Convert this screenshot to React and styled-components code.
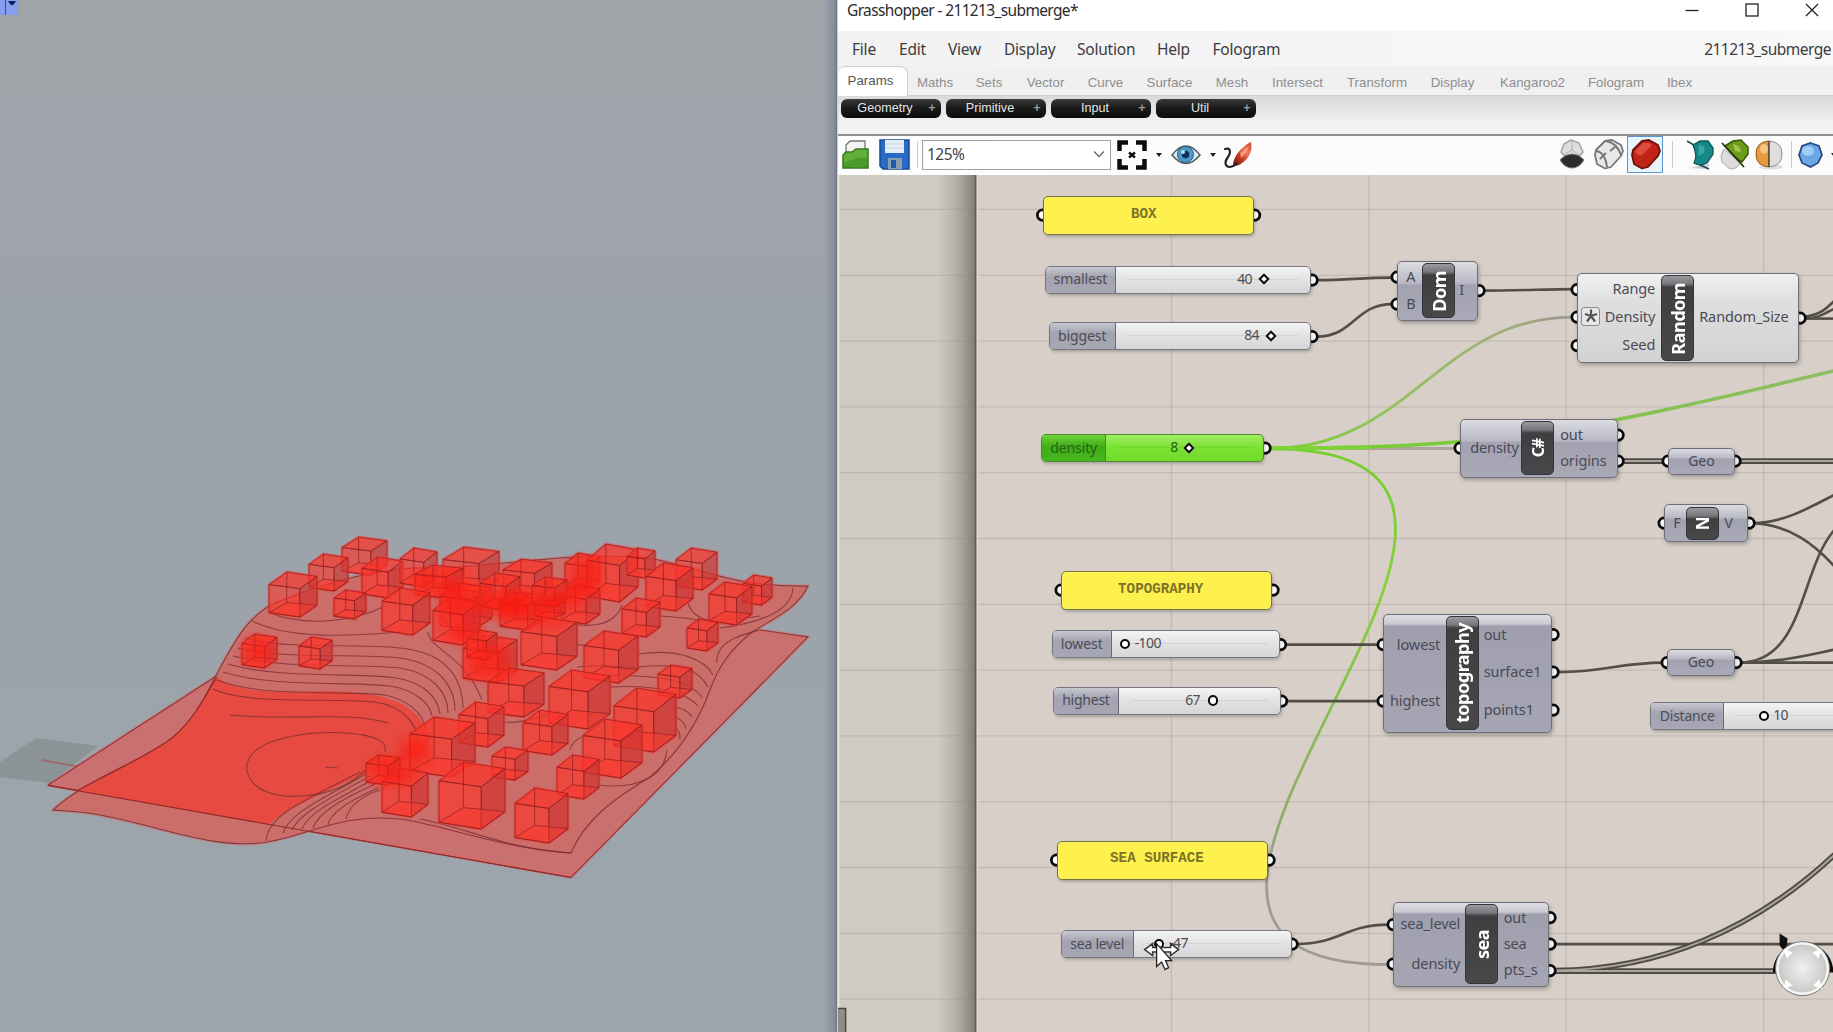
import React from "react";
import styled, { createGlobalStyle } from "styled-components";

const Global = createGlobalStyle`
  *{box-sizing:border-box}
  html,body{margin:0;height:100%;overflow:hidden;background:#9ca3ab}
`;
const Desktop = styled.div`
  display:flex;width:1833px;height:1032px;overflow:hidden;
  font-family:"Noto Sans","Open Sans",sans-serif;
`;

/* ---------- 3D viewport ---------- */
const Viewport = styled.section`
  width:837px;height:1032px;flex:none;
  background:linear-gradient(90deg,transparent 824px,#8f95a2 831px,#858a98 835px,#6c707c 837px),linear-gradient(180deg,#9fa4a9 0,#9ca3aa 400px,#9ca5ad 1032px);
  svg{display:block}
`;
const BOXES = [
  [342,537,387,575],[309,554,348,591],[362,557,403,598],[269,572,317,617],[334,590,366,619],[400,548,437,587],
  [443,547,499,592],[415,565,463,598],[503,559,552,598],[565,553,600,590],[587,544,638,602],[627,548,655,578],
  [676,548,717,590],[743,575,772,605],[646,563,693,611],[709,582,752,625],[382,588,430,635],[561,585,600,624],
  [440,583,492,630],[433,597,480,645],[480,573,520,610],[500,592,543,630],[532,577,567,607],[535,600,565,618],
  [622,598,660,637],[687,619,718,651],[242,634,277,668],[299,637,332,669],[521,617,577,670],[584,631,638,683],
  [463,635,517,683],[467,630,497,660],[488,668,544,717],[549,670,610,729],[658,665,692,698],[614,688,676,752],
  [459,702,504,747],[523,710,568,755],[583,719,642,778],[410,717,475,777],[366,755,400,785],
  [492,747,528,780],[557,755,599,799],[382,768,428,817],[439,762,505,829],[515,788,568,843],
];
const HOT = [[440,590,88,26],[500,596,60,26],[545,585,40,24],[468,645,42,32],[572,560,28,34],[372,760,40,24],[450,622,30,20],[245,640,28,22],[415,575,50,18],[400,740,30,24]];

function Cube({ b: [x0, y0, x1, y1] }) {
  const w = x1 - x0, h = y1 - y0;
  const P = (a, c) => `${(x0 + a * w).toFixed(1)},${(y0 + c * h).toFixed(1)}`;
  const A = P(0, .28), B = P(.64, .37), C = P(.64, 1), D = P(0, .9);
  const E = P(.37, 0), F = P(1, .1), G = P(1, .74), H = P(.37, .68);
  return (
    <g stroke="#8e1f1f" strokeOpacity=".7" strokeWidth="1" strokeLinejoin="round">
      <polygon points={`${A} ${E} ${F} ${G} ${C} ${D}`} fill="#fb2f25" fillOpacity=".5" stroke="#fb3a32" strokeOpacity=".5" strokeWidth="3" />
      <polygon points={`${A} ${E} ${F} ${B}`} fill="#fb352b" fillOpacity=".5" />
      <polygon points={`${B} ${F} ${G} ${C}`} fill="#b53a3a" fillOpacity=".45" />
      <polygon points={`${A} ${B} ${C} ${D}`} fill="#ff3a2e" fillOpacity=".28" />
      <polygon points={`${D} ${H} ${G} ${C}`} fill="#ff3a2e" fillOpacity=".45" />
      <path d={`M${E} L${H}`} fill="none" />
    </g>
  );
}
const TERRAIN = "M53,810 C85,780 140,762 170,740 C197,718 208,690 219,670 C235,640 250,612 280,601 C320,585 380,565 440,568 C500,566 560,553 640,557 C690,562 725,588 808,586 C798,608 775,618 752,632 C728,652 718,668 710,690 C698,722 680,752 650,777 C612,800 585,820 571,853 C500,848 440,824 400,819 C340,813 310,835 267,842 C210,852 140,818 80,812 Z";
const BASIN = "M77,791 C110,772 145,758 172,738 C196,718 207,692 217,677 C240,695 280,692 330,691 C370,692 410,698 424,725 C438,745 420,755 400,762 C360,775 335,787 305,802 C285,812 275,818 269,825 Z";
const CONTOURS = [
  "M268,612 C300,626 350,624 385,606","M252,621 C290,640 350,636 400,632",
  "M245,638 C290,650 350,643 400,648 C440,652 462,672 463,708",
  "M238,648 C290,660 350,653 400,658 C436,663 455,684 455,711",
  "M233,656 C290,670 350,663 400,668 C432,673 448,692 448,713",
  "M228,664 C280,679 350,672 396,678 C424,682 438,698 440,714",
  "M223,672 C275,688 345,681 390,686 C416,690 430,704 432,716",
  "M217,680 C262,698 340,690 385,695 C408,700 424,714 425,728",
  "M213,689 C250,706 330,697 375,702 C402,706 418,724 417,740",
  "M230,715 C290,721 350,711 388,723",
  "M385,752 C390,735 350,731 315,733 C265,738 245,752 247,770 C250,790 275,798 300,796 C330,795 350,785 366,770",
  "M266,841 C268,815 300,803 360,772","M283,833 C290,812 325,798 366,774","M292,830 C300,812 335,796 370,776",
  "M302,829 C308,812 340,798 372,780","M313,828 C318,812 345,798 375,784","M328,825 C330,812 355,798 378,788","M346,819 C348,808 360,796 380,790",
  "M638,654 C680,648 705,660 713,675","M638,667 C685,662 700,672 708,687","M610,675 C670,676 690,682 702,697","M610,687 C665,684 690,696 698,706",
  "M673,707 C685,708 690,714 692,717","M675,717 C683,720 686,726 686,729","M675,728 Q681,732 680,740",
  "M598,785 C640,790 665,775 667,750","M570,750 Q572,740 585,736","M428,632 C430,650 465,655 482,700",
  "M505,722 C520,724 540,716 560,712","M793,588 C792,610 765,622 720,628","M688,603 C695,625 715,622 760,616",
  "M717,663 C715,640 745,634 760,630","M552,618 C590,632 615,625 622,605","M660,616 C690,618 700,620 712,622",
  "M577,645 L584,645","M577,667 C600,665 612,666 640,668","M420,819 C460,826 510,850 571,853",
];
function Scene() {
  return (
    <svg width="837" height="1032" viewBox="0 0 837 1032">
      <defs><filter id="soft"><feGaussianBlur stdDeviation="5" /></filter></defs>
      <path d="M0,762 L36,738 L98,746 L50,783 L0,777Z" fill="#8b9397" />
      <path d="M50,758 L60,748" stroke="#7ba07b" strokeWidth="1.5" />
      <path d="M42,760 L85,768" stroke="#9b6a6c" strokeWidth="2" />
      <g stroke="#f0605b" strokeOpacity=".45" strokeWidth="3.500" fill="#c97171" strokeLinejoin="round">
        <path d="M48,785 L218,675 L260,690 L560,700 L760,630 L808,637 L571,877Z" />
        <path d={TERRAIN} />
      </g>
      <path d="M48,785 L218,675 M760,630 L808,637 L571,877.5 L48,785" fill="none" stroke="#7f3a40" strokeWidth="1.1" />
      <path d={TERRAIN} fill="#cb6d69" stroke="#7f3a40" strokeWidth="1.1" />
      <path d={BASIN} fill="#e64a40" />
      <path d="M48,785.5 L571,877.5 M77,791 C110,772 145,758 172,738 C196,718 207,692 217,677" fill="none" stroke="#8e2b2c" strokeWidth="1.1" />
      <g fill="none" stroke="#752d2f" strokeOpacity=".75" strokeWidth="1.1">{CONTOURS.map((d) => <path key={d} d={d} />)}<path d="M325,767 L338,768" /></g>
      {BOXES.map((b) => <Cube key={b.join()} b={b} />)}
      <g fill="#fb1a12" fillOpacity=".65" filter="url(#soft)">
        {HOT.map(([x, y, w, h]) => <rect key={x + "-" + y} x={x} y={y} width={w} height={h} />)}
      </g>
      <rect x="0" y="0" width="18" height="15" fill="#869df0" />
      <path d="M5.5,0 V15" stroke="#3c4f8a" strokeWidth="1" />
      <path d="M8,1 H16 L14,4 L12,5.500 L10,4Z" fill="#0d1f5c" />
    </svg>
  );
}

/* ---------- window chrome ---------- */
const Window = styled.main`
  flex:1;min-width:0;height:1032px;display:flex;flex-direction:column;border-left:1px solid #cfd0d6;background:#fff;overflow:hidden;
`;
const TitleBar = styled.header`
  height:31px;flex:none;display:flex;align-items:flex-start;justify-content:space-between;padding-left:9px;background:#fff;
  color:#2b2b2b;font-size:15.5px;line-height:21px;letter-spacing:-.64px;
`;
const WinButtons = styled.div`
  display:flex;gap:46px;padding:3px 14.5px 0 0;
  svg{width:14px;height:14px;display:block;stroke:#222;fill:none;stroke-width:1.3}
`;
const MenuBar = styled.nav`
  height:35px;flex:none;display:flex;align-items:center;padding:1px 0 0 14px;background:linear-gradient(90deg,#f2f2f2,#f8f8f8);
  color:#3c3c3c;font-size:15.5px;
`;
const MenuItem = styled.span`width:${(p) => p.$w}px;flex:none;white-space:nowrap;letter-spacing:-.22px;`;
const FileName = styled.span`margin-left:auto;padding-right:2px;letter-spacing:-.5px;`;
const TabRow = styled.div`
  height:30px;flex:none;display:flex;align-items:flex-end;background:#f0f0f0;border-bottom:1px solid #cfcfcf;
  font-family:"Liberation Sans",Arial,sans-serif;font-size:13.3px;color:#8e8e8e;
`;
const Tab = styled.span`
  width:${(p) => p.$w}px;height:29px;flex:none;white-space:nowrap;text-align:center;line-height:33px;
  ${(p) => p.$on && "background:#fff;color:#555;border:1px solid #cfcfcf;border-width:1px 1px 0 0;border-radius:7px 8px 0 0;line-height:28px;height:30px;margin-bottom:-1px;padding-right:4px;"}
`;
const Ribbon = styled.div`
  height:38px;flex:none;display:flex;gap:5px;padding:3px 0 0 3px;background:linear-gradient(#d9dadb,#f1f1f2 70%,#f4f4f4);
`;
const Group = styled.div`
  width:100px;height:19px;border-radius:6px;background:linear-gradient(#3b3b3b,#1b1b1b 45%,#0c0c0c);color:#e4e4e4;
  font:12.6px/18px "Liberation Sans",Arial,sans-serif;display:flex;align-items:flex-start;
  span{flex:1;text-align:center;padding-left:2px}
  i{width:18px;font-style:normal;font-weight:bold;color:#999;text-align:center;margin-left:-4px}
`;
const Toolbar = styled.div`
  height:41px;flex:none;display:flex;align-items:center;border-top:2px solid #8d8d92;padding-bottom:2px;background:linear-gradient(90deg,#fdfdfd,#fbfbfc);
  > svg{flex:none}
`;
const Space = styled.span`width:${(p) => p.$w}px;flex:none;`;
const Sep = styled.span`width:1px;height:27px;background:#c9c9cc;flex:none;`;
const Zoom = styled.div`
  width:189px;height:30px;flex:none;border:1px solid #a0a0a0;background:#fff;display:flex;align-items:center;justify-content:space-between;
  padding:0 5px 2px 4px;font-size:15.5px;letter-spacing:-.5px;color:#444;
`;
const Caret = styled.span`width:0;height:0;flex:none;border:3px solid transparent;border-top:4px solid #222;border-bottom:0;`;
const Picked = styled.span`
  width:36px;height:37px;flex:none;display:grid;place-items:center;border:1.500px solid #5f97cc;background:#e9f3fb;
`;

const FolderIcon = () => (
  <svg width="28" height="32" viewBox="0 0 28 32"><path d="M4,14 V6 L8,2 H23 V18 H4Z" fill="#f3f3f3" stroke="#777" strokeWidth="1.300" /><path d="M1,29 V16 L4,13 H10 L14,10 H26 V29Z" fill="#62b03a" stroke="#34771d" strokeWidth="1.500" /><path d="M2,24 Q14,18 25,19 V28 H2Z" fill="#4a9a29" /></svg>
);
const SaveIcon = () => (
  <svg width="31" height="31" viewBox="0 0 31 31"><path d="M1,1 H30 V30 H4 L1,27Z" fill="#276bc7" stroke="#184a94" strokeWidth="1.500" /><rect x="6" y="1" width="19" height="13" fill="#e7edf4" /><path d="M6,5 H25 M6,9 H25" stroke="#c9d4e2" /><rect x="9" y="19" width="14" height="11" fill="#8c9ead" /><rect x="12" y="21" width="5" height="8" fill="#1f5aa8" /></svg>
);
const FitIcon = () => (
  <svg width="30" height="30" viewBox="0 0 30 30" fill="none" stroke="#0c0c0c" strokeWidth="4.500"><path d="M2.500,11 V2.500 H11 M19,2.500 H27.500 V11 M27.500,19 V27.500 H19 M11,27.500 H2.500 V19" /><path d="M12,12.500 L18,17.500 M18,12.500 L12,17.500" strokeWidth="2.300" /></svg>
);
const EyeIcon = () => (
  <svg width="30" height="22" viewBox="0 0 30 22"><path d="M1,11 Q15,-7 29,11 Q15,28 1,11Z" fill="#dbeaf0" stroke="#50585c" strokeWidth="1.500" /><circle cx="14.500" cy="10.500" r="8" fill="#4a9bc8" stroke="#2b607e" /><circle cx="14.500" cy="10.500" r="3.800" fill="#0f2f55" /><circle cx="12" cy="8" r="2" fill="#b9e2f4" /></svg>
);
const SketchIcon = () => (
  <svg width="30" height="30" viewBox="0 0 30 30">
    <defs><linearGradient id="brush" x1="0" y1="1" x2="1" y2="0"><stop offset="0" stopColor="#5a1710" /><stop offset=".4" stopColor="#c93a22" /><stop offset=".65" stopColor="#f07a55" /><stop offset="1" stopColor="#c8402c" /></linearGradient></defs>
    <path d="M10,24 C11,16 19,6 28,2 C30,12 25,20 16,25 Q12,27 10,24Z" fill="url(#brush)" />
    <path d="M17,13 Q24,8 26,6 Q24,13 18,18Z" fill="#f9b49a" opacity=".7" />
    <path d="M2,9 C8,7 8,13 5,17 C1,22 2,27 7,27 Q10,27 13,24" fill="none" stroke="#25201e" strokeWidth="2.200" strokeLinecap="round" />
  </svg>
);
const Barrel = ({ fill, edge, hi, wire }) => (
  <svg width="31" height="31" viewBox="0 0 31 31">
    <path d="M2,16 L3,11 L12,2 L19,1 L28,6 L30,12 L28,17 L18,28 L12,29.500 L4,25Z" fill={fill} stroke={edge} strokeWidth="1.800" strokeLinejoin="round" />
    {!wire && <path d="M5,12 L13,4 Q19,3 22,6 L12,16 Q6,17 5,12Z" fill={hi} opacity=".55" />}
    {wire && <path d="M3,12 Q12,13 14,28 M13,2 Q24,4 28,16 M7,20 L13,14 M17,12 L22,8" fill="none" stroke="#777" strokeWidth="1.900" />}
  </svg>
);
const HiddenIcon = () => (
  <svg width="26" height="31" viewBox="0 0 26 31"><path d="M2,13 L5,5 L12,1 L20,4 L24,13 L18,20 H8Z" fill="#dedede" stroke="#a4a4a4" strokeWidth="1.500" strokeLinejoin="round" /><path d="M13,2 V11 L20,16 M13,11 L6,15" stroke="#b0b0b0" fill="none" /><path d="M1,21 Q6,15 13,15 Q20,15 25,21 Q20,29 13,29 Q6,29 1,21Z" fill="#2c2c2c" stroke="#777" /></svg>
);
const TealIcon = () => (
  <svg width="29" height="32" viewBox="0 0 29 32"><path d="M3,29 L21,30 L24,25Z" fill="#ccc" /><path d="M7,6 L14,2 L22,2 L27,9 L27,15 L21,24 Q14,28 8,24 Q12,17 7,6Z" fill="#168789" stroke="#0c5658" strokeWidth="1.300" /><path d="M13,6 Q20,5 18,14 L12,17Z" fill="#50b8b6" opacity=".6" /><path d="M1,2 L8,6 M14,26 L23,30" fill="none" stroke="#184d50" strokeWidth="1.500" /></svg>
);
const GreenIcon = () => (
  <svg width="31" height="32" viewBox="0 0 31 32"><path d="M5,10 L2,17 L3,23 L11,30 L17,29 L22,24Z" fill="#dcdcdc" stroke="#aaa" /><path d="M6,7 L14,2 L22,1 L29,8 L29,15 L23,23 Q16,19 6,7Z" fill="#6c9c1a" stroke="#39570b" strokeWidth="1.500" /><path d="M14,5 Q21,6 22,13 L16,12Z" fill="#b6d864" opacity=".7" /><path d="M3,4 L25,28" stroke="#233606" strokeWidth="1.800" fill="none" /></svg>
);
const HalfIcon = () => (
  <svg width="29" height="31" viewBox="0 0 29 31"><ellipse cx="16" cy="28" rx="12" ry="2.500" fill="#ddd" /><path d="M14,2 Q1,3 1,15 Q1,27 14,28Z" fill="#e79a37" stroke="#8e5a1a" /><path d="M14,2 Q27,3 27,15 Q27,27 14,28Z" fill="#dededc" stroke="#8f8f8d" /><ellipse cx="9" cy="10" rx="4" ry="5" fill="#fbd9a2" opacity=".7" /><path d="M14,2 V28" stroke="#4b3f33" strokeWidth="1.300" /></svg>
);
const BlueIcon = () => (
  <svg width="25" height="26" viewBox="0 0 25 26"><path d="M12.500,1 L21,4 L24,13 L20,21 L12.500,25 L4,21 L1,13 L4,4Z" fill="#6da6e4" stroke="#244b80" strokeWidth="1.700" /><ellipse cx="10" cy="9" rx="6" ry="5" fill="#b6dbfa" opacity=".7" /></svg>
);

/* ---------- graph canvas ---------- */
const OX = 838.8, OY = 175.6;
const Canvas = styled.section`position:relative;flex:1;min-height:0;overflow:hidden;background:#d7cfc8;`;
const Layer = styled.svg`position:absolute;inset:0;display:block;`;
const placed = (p) => `position:absolute;left:${p.$x - OX}px;top:${p.$y - OY}px;width:${p.$w}px;height:${p.$h}px;`;
const Note = styled.div`
  ${placed}
  border:1.500px solid #77713a;border-radius:5px;background:#fef04d;box-shadow:inset 0 0 2px #fff8a0,1px 2px 3px #0003;
  display:flex;align-items:center;justify-content:center;padding:0 9px 4px 0;padding-right:${(p) => p.$pad ?? 9}px;
  font:bold 14.2px/20px "Liberation Mono","Courier New",monospace;color:#7c7228;white-space:pre;
`;
const lilac = "linear-gradient(#dcdce2,#b9b9c6 36%,#a2a2b1 40%,#a9a9b8)";
const SliderBox = styled.div`
  ${placed}
  display:flex;border:1.500px solid #77767e;border-radius:5px;overflow:hidden;font-size:14px;color:#4d4d55;
  background:${(p) => (p.$green ? "linear-gradient(#a2ee63,#7be234 45%,#72da2b)" : "linear-gradient(#f4f4f5,#e3e3e4 45%,#d6d6d8)")};
  ${(p) => p.$green && "border-color:#4d8a2b;color:#26611a;"}
  box-shadow:1px 2px 3px #0003;
`;
const SliderLabel = styled.div`
  width:${(p) => p.$w}px;flex:none;border-right:1.500px solid #6a6a73;display:flex;align-items:center;justify-content:center;padding-bottom:2px;
  letter-spacing:${(p) => p.$ls ?? -0.1}px;
  background:${(p) => (p.$green ? "linear-gradient(#6fd23c,#3fae17 45%,#47b51d)" : "linear-gradient(#c8c8d1,#a3a3b1 40%,#a6a6b5)")};
`;
const Rail = styled.div`
  position:relative;flex:1;
  &::before{content:"";position:absolute;left:12px;right:12px;top:12px;height:1px;background:#0001;}
`;
const Value = styled.span`position:absolute;top:2px;left:${(p) => p.$x + 1}px;line-height:20px;letter-spacing:-.6px;`;
const Grip = styled.i`
  position:absolute;top:${(p) => (p.$round ? 7.5 : 8.5)}px;left:${(p) => p.$x + 1 - (p.$round ? 5 : 4)}px;
  width:${(p) => (p.$round ? 10.5 : 8)}px;height:${(p) => (p.$round ? 10.5 : 8)}px;border:2.700px solid #0b0b0b;background:#fff;
  ${(p) => (p.$round ? "border-radius:50%;" : "transform:rotate(45deg);")}
`;
function Slider({ x, y, w, split, label, value, vx, gx, round, green, ls }) {
  return (
    <SliderBox $x={x} $y={y} $w={w} $h={28} $green={green}>
      <SliderLabel $w={split - x} $green={green} $ls={ls}>{label}</SliderLabel>
      <Rail><Value $x={vx - split - 1}>{value}</Value><Grip $x={gx - split - 1} $round={round} /></Rail>
    </SliderBox>
  );
}
const Body = styled.div`
  ${placed}
  border:1.500px solid #6f6e78;border-radius:5px;font-size:${(p) => p.$fs ?? 14.5}px;color:#4a4a55;
  background:${(p) => (p.$light ? "linear-gradient(#f1f1f1,#dfdfdf 30%,#d2d2d2)" : p.$tall ? "linear-gradient(#dedee4,#c9c9d2 9px,#9f9fae 11px,#a5a5b3)" : lilac)};
  box-shadow:1px 2px 4px #0004;
  display:flex;align-items:center;justify-content:center;line-height:20px;padding-bottom:1px;
`;
const Core = styled.div`
  ${placed}
  border:1.500px solid #34343a;border-radius:5px;display:flex;align-items:center;justify-content:center;
  background:linear-gradient(#9b9b9f,#77777b 8px,#3f3f42 11px,#48484b);color:#fff;
  span{writing-mode:vertical-rl;transform:rotate(180deg);font:bold ${(p) => p.$fs ?? 18.2}px/30px "Noto Sans",sans-serif;letter-spacing:${(p) => p.$ls ?? -0.6}px;white-space:nowrap}
`;
const PortName = styled.span`
  position:absolute;top:${(p) => p.$y - OY - 11}px;height:20px;line-height:20px;font-size:14.5px;color:#4a4a55;white-space:nowrap;
  letter-spacing:-.1px;
  ${(p) => (p.$right ? `right:${OX + 995 - p.$right}px;` : `left:${p.$x - OX}px;`)}
`;
const Modifier = styled.div`
  ${placed}
  border:1.500px solid #8b8b8b;border-radius:3px;background:#e8e8e8;display:grid;place-items:center;
`;
const H = [209.8,275.7,341.5,407.3,473.1,538.9,604.7,670.5,736.3,802.1,867.9,933.7,999.5];
const V = [1171.8,1369.2,1566.6,1764];
const PORTS_L = [[1043.5,215.500],[1062,590.5],[1057.5,860.5],[1398,277.5],[1398,304.5],[1578,290],[1578,317.5],[1578,346],[1461,448.5],[1669,461.5],[1665,523.5],[1384,645],[1384,701.5],[1668,663],[1394,925],[1394,964.5]];
const PORTS_R = [[1254.5,215.500],[1273,590.5],[1269,860.5],[1312,280.5],[1312,337],[1265,448.500],[1280.5,645],[1281.5,701.5],[1292,944.5],[1479,291],[1800,318.5],[1618,435.500],[1618,461.5],[1735,461.5],[1749,523.5],[1553,635],[1553,672.5],[1553,710.5],[1736,663],[1550,918],[1550,944.5],[1550,971]];
const WIRES = [
  "M1317,280.500 C1350,280.500 1360,278 1393,278","M1317,337 C1355,337 1355,304.500 1393,304.500",
  "M1484,291 C1510,291 1540,290 1573,289.500","M1286,645 H1379","M1287,701.500 H1379",
  "M1558,672.500 C1605,672.500 1620,663 1664,663","M1297,944.500 C1340,944.500 1345,925 1389,925",
  "M1753,523.500 C1785,523 1810,508 1835,495","M1753,523.500 C1790,525 1815,545 1835,567",
  "M1740,663 C1805,663 1800,570 1835,530","M1740,663 C1780,663 1810,655 1835,650","M1740,663 H1835",
  "M1555,944.500 H1835","M1804,317 C1820,316 1828,308 1835,301","M1804,319 C1820,319 1828,312 1835,309","M1804,319 H1835",
];
const DOUBLES = ["M1622,461.500 H1665","M1739,461.500 H1835","M1555,971 C1660,970 1755,930 1835,855","M1555,971.500 H1780"];

function Backdrop() {
  return (
    <Layer width="995" height="857" viewBox="838.4 175.4 995 857">
      <defs>
        <linearGradient id="edge" x1="0" x2="1"><stop offset="0" stopColor="#8a877f" stopOpacity="0" /><stop offset=".45" stopColor="#8a877f" stopOpacity=".35" /><stop offset="1" stopColor="#7c7870" stopOpacity=".95" /></linearGradient>
        <linearGradient id="g1" gradientUnits="userSpaceOnUse" x1="1270" x2="1573" y1="0" y2="0"><stop offset="0" stopColor="#74cf2c" /><stop offset=".35" stopColor="#8fc657" /><stop offset=".75" stopColor="#a0b078" /><stop offset="1" stopColor="#9c9890" /></linearGradient>
        <linearGradient id="g2" gradientUnits="userSpaceOnUse" x1="0" x2="0" y1="449" y2="965"><stop offset="0" stopColor="#74cf2c" /><stop offset=".3" stopColor="#86cf3e" /><stop offset=".7" stopColor="#8fae68" /><stop offset=".82" stopColor="#9aa08a" /><stop offset="1" stopColor="#a09a92" /></linearGradient>
        <linearGradient id="g3" gradientUnits="userSpaceOnUse" x1="1270" x2="1833" y1="0" y2="0"><stop offset="0" stopColor="#74cf2c" /><stop offset="1" stopColor="#8dbc62" /></linearGradient>
      </defs>
      <rect x="838" y="175" width="137" height="858" fill="#cfcac2" />
      <g stroke="#a9a098" strokeOpacity=".42" strokeWidth="1.300">
        {H.map((y) => <path key={y} d={`M838,${y} H1835`} />)}
        {V.map((x) => <path key={x} d={`M${x},175 V1034`} />)}
      </g>
      <rect x="938" y="175" width="38" height="858" fill="url(#edge)" />
      <path d="M976,175 V1034" stroke="#5f5c58" strokeWidth="1.800" />
      <path d="M978,175 V1034" stroke="#e2dcd5" strokeWidth="1.500" />
      <path d="M839,175 V1034" stroke="#eae7e3" strokeWidth="1.500" />
      <path d="M838,1009 H846 V1034 H838Z" fill="#908c87" />
      <path d="M838,1009 H846 V1034" fill="none" stroke="#4a4744" strokeWidth="1.500" />
      <g fill="none">
        <path d="M1270,449 H1457" stroke="#aaa69c" strokeWidth="3" />
        <path d="M1270,449 C1410,449 1440,317.500 1573,317.500" stroke="url(#g1)" strokeWidth="2.800" />
        <path d="M1270,449 C1648,449 1018,965 1389,965" stroke="url(#g2)" strokeWidth="2.800" />
        <path d="M1270,448.500 C1480,448 1560,438 1835,371" stroke="url(#g3)" strokeWidth="3.600" />
        <path d="M1270,449 C1310,449 1330,448 1370,448" stroke="#7cd236" strokeWidth="3.800" />
        <g stroke="#544e49" strokeWidth="2.600">{WIRES.map((d) => <path key={d} d={d} />)}</g>
        <g stroke="#4f4a46" strokeWidth="5.600">{DOUBLES.map((d) => <path key={d} d={d} />)}</g>
        <g stroke="#aaa49c" strokeWidth="2">{DOUBLES.map((d) => <path key={d} d={d} />)}</g>
      </g>
      <g fill="#fff" stroke="#0c0c0c" strokeWidth="2.800">
        {PORTS_L.map(([x, y]) => <circle key={`${x},${y}`} cx={x - .5} cy={y} r="5.2" />)}
        {PORTS_R.map(([x, y]) => <circle key={`${x},${y}`} cx={x + .5} cy={y} r="5.2" />)}
      </g>
    </Layer>
  );
}
function Overlay() {
  return (
    <Layer width="995" height="857" viewBox="838.4 175.4 995 857">
      <defs><radialGradient id="ball"><stop offset="0" stopColor="#f1f0ef" /><stop offset=".7" stopColor="#d5d4d3" /><stop offset="1" stopColor="#c6c5c3" /></radialGradient></defs>
      <path d="M1775.500,973 A28,28 0 0 1 1831.500,973" fill="none" stroke="#0c0c0c" strokeWidth="4.500" />
      <path d="M1780,934 L1788,939 L1787,946 L1793,944 L1784,951 L1780,946Z" fill="#111" />
      <circle cx="1803" cy="969" r="25.500" fill="url(#ball)" stroke="#f7f7f6" strokeWidth="3" />
      <circle cx="1803" cy="969" r="27" fill="none" stroke="#777" strokeWidth="1" />
      <path d="M1784,949 L1793,953 L1787,959Z M1822,949 L1813,953 L1819,959Z M1784,989 L1786,980 L1793,986Z M1822,989 L1820,980 L1813,986Z" fill="#fff" />
      <path d="M1145,950 L1153,944 V948 H1171 V944 L1179,950 L1171,956 V952.500 H1153 V956Z" fill="#fff" stroke="#333" strokeWidth="1.500" />
      <path d="M1157,944 V967 L1162,962.500 L1165.500,970 L1169,968 L1166,961 H1172Z" fill="#fff" stroke="#222" strokeWidth="1.300" />
    </Layer>
  );
}

const MENUS = [["File",47],["Edit",49],["View",56],["Display",73],["Solution",80],["Help",55.5],["Fologram",90]];
const TABS = [["Params",70,1],["Maths",54],["Sets",54],["Vector",59],["Curve",61],["Surface",67],["Mesh",58],["Intersect",73],["Transform",86],["Display",65],["Kangaroo2",95],["Fologram",72],["Ibex",55]];

export default function App() {
  return (
    <Desktop>
      <Global />
      <Viewport><Scene /></Viewport>
      <Window>
        <TitleBar>
          <span>Grasshopper - 211213_submerge*</span>
          <WinButtons>
            <svg viewBox="0 0 14 14"><path d="M0.500,7.500 H13.500" /></svg>
            <svg viewBox="0 0 14 14"><rect x="1" y="1" width="12" height="12" /></svg>
            <svg viewBox="0 0 14 14"><path d="M1,1 L13,13 M13,1 L1,13" /></svg>
          </WinButtons>
        </TitleBar>
        <MenuBar>
          {MENUS.map(([t, w]) => <MenuItem key={t} $w={w}>{t}</MenuItem>)}
          <FileName>211213_submerge</FileName>
        </MenuBar>
        <TabRow>{TABS.map(([t, w, on]) => <Tab key={t} $w={w} $on={on}>{t}</Tab>)}</TabRow>
        <Ribbon>{["Geometry","Primitive","Input","Util"].map((t) => <Group key={t}><span>{t}</span><i>+</i></Group>)}</Ribbon>
        <Toolbar>
          <Space $w={4} /><FolderIcon /><Space $w={9} /><SaveIcon /><Space $w={7} /><Sep /><Space $w={4} />
          <Zoom>125%<svg width="12" height="8" viewBox="0 0 12 8" fill="none" stroke="#666" strokeWidth="1.300"><path d="M1,1.500 L6,6.500 L11,1.500" /></svg></Zoom>
          <Space $w={6} /><FitIcon /><Space $w={9} /><Caret /><Space $w={9} /><EyeIcon /><Space $w={9} /><Caret /><Space $w={7} /><SketchIcon />
          <Space $w={306} /><HiddenIcon /><Space $w={8} /><Barrel fill="#e8e8e8" edge="#777" hi="#fff" wire /><Space $w={3} />
          <Picked><Barrel fill="#c22317" edge="#6b120b" hi="#f0705f" /></Picked>
          <Space $w={9} /><Sep /><Space $w={13} /><TealIcon /><Space $w={4} /><GreenIcon /><Space $w={5} /><HalfIcon /><Space $w={7} /><Sep /><Space $w={6} /><BlueIcon /><Space $w={8} /><Caret />
        </Toolbar>
        <Canvas>
          <Backdrop />
          <Note $x={1043.5} $y={197} $w={211} $h={39}>BOX</Note>
          <Note $x={1062} $y={572} $w={211} $h={39} $pad={12}>TOPOGRAPHY</Note>
          <Note $x={1057.5} $y={841.5} $w={211.5} $h={39} $pad={11}>SEA SURFACE</Note>

          <Slider x={1046} y={266.5} w={266} split={1115.5} label="smallest" value="40" vx={1237} gx={1263.500} />
          <Slider x={1049.5} y={323} w={262} split={1115.5} label="biggest" value="84" vx={1244} gx={1270.500} />
          <Slider x={1042} y={435} w={223} split={1106} label="density" value="8" vx={1170} gx={1189} green />
          <Slider x={1052.5} y={631} w={228} split={1111.5} label="lowest" value="-100" vx={1134.500} gx={1124.500} round />
          <Slider x={1053.5} y={687.5} w={228} split={1119} label="highest" value="67" vx={1185} gx={1212.500} round ls={-.25} />
          <Slider x={1061.5} y={931} w={231} split={1133.5} label="sea level" value="-47" vx={1169} gx={1158.500} round ls={-.25} />
          <Slider x={1651} y={703} w={200} split={1724} label="Distance" value="10" vx={1773} gx={1763.500} round ls={-.25} />

          <Body $x={1398} $y={261.5} $w={81} $h={60} /><Core $x={1423} $y={264} $w={33} $h={55}><span>Dom</span></Core>
          <PortName $x={1407} $y={278}>A</PortName><PortName $x={1407} $y={305}>B</PortName><PortName $x={1460} $y={291}>I</PortName>

          <Body $x={1578} $y={273.5} $w={222} $h={90.500} $light /><Core $x={1662} $y={276} $w={33} $h={86}><span>Random</span></Core>
          <PortName $right={1656} $y={290}>Range</PortName><PortName $right={1656} $y={318}>Density</PortName><PortName $right={1656} $y={346}>Seed</PortName>
          <PortName $x={1700} $y={318}>Random_Size</PortName>
          <Modifier $x={1582} $y={307.5} $w={19} $h={19}><svg width="14" height="14" viewBox="0 0 14 14" fill="none" stroke="#555" strokeWidth="2.200"><path d="M7,7 V0.500 M7,7 L1,5 M7,7 L13,5 M7,7 L3,12.500 M7,7 L11,12.500" /></svg></Modifier>

          <Body $x={1461} $y={419.500} $w={157.500} $h={59} /><Core $x={1522} $y={422} $w={33} $h={54} $fs={16} $ls={-1.2}><span>C#</span></Core>
          <PortName $x={1471} $y={448.500}>density</PortName><PortName $x={1561} $y={435.500}>out</PortName><PortName $x={1561} $y={461.500}>origins</PortName>

          <Body $x={1669} $y={448.5} $w={66.500} $h={27.500} $fs={14}>Geo</Body>
          <Body $x={1665} $y={505} $w={84} $h={37.500} /><Core $x={1687} $y={507.5} $w={33} $h={33} $fs={17}><span>N</span></Core>
          <PortName $x={1674} $y={524}>F</PortName><PortName $x={1725} $y={524}>V</PortName>

          <Body $x={1384} $y={614.500} $w={169} $h={119} $tall /><Core $x={1446.5} $y={617} $w={33} $h={114}><span>topography</span></Core>
          <PortName $right={1441} $y={645.500}>lowest</PortName><PortName $right={1441} $y={702}>highest</PortName>
          <PortName $x={1484.5} $y={635.5}>out</PortName><PortName $x={1484.5} $y={673}>surface1</PortName><PortName $x={1484.5} $y={711}>points1</PortName>

          <Body $x={1668} $y={649.500} $w={67.5} $h={27.500} $fs={14}>Geo</Body>
          <Body $x={1394} $y={902.500} $w={156} $h={85} $tall /><Core $x={1466} $y={905} $w={33} $h={80}><span>sea</span></Core>
          <PortName $right={1461} $y={924.500}>sea_level</PortName><PortName $right={1461} $y={964.500}>density</PortName>
          <PortName $x={1504.5} $y={918.500}>out</PortName><PortName $x={1504.5} $y={944.500}>sea</PortName><PortName $x={1504.5} $y={971}>pts_s</PortName>
          <Overlay />
        </Canvas>
      </Window>
    </Desktop>
  );
}
